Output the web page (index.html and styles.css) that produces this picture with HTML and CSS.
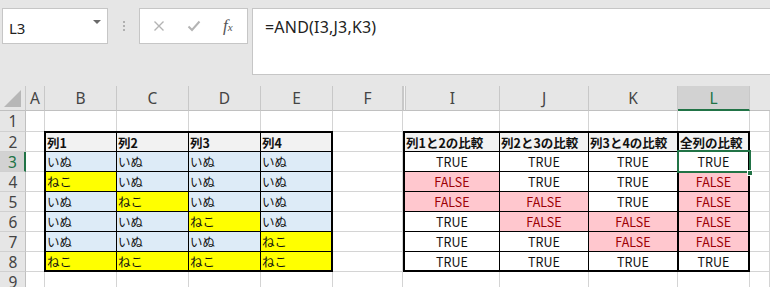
FILE: index.html
```html
<!DOCTYPE html>
<html lang="ja">
<head>
<meta charset="utf-8">
<link rel="stylesheet" href="styles.css">
</head>
<body>
<div class="app">
  <div class="toolbar">
    <div class="namebox"><span class="nb-text">L3</span><span class="nb-arrow"></span></div>
    <div class="grip"><i></i><i></i><i></i></div>
    <div class="fxbox">
      <svg class="ico" width="12" height="12" viewBox="0 0 12 12"><path d="M1.5 1.5 L10.5 10.5 M10.5 1.5 L1.5 10.5" stroke="#b4b4b4" stroke-width="1.4" fill="none"/></svg>
      <svg class="ico" width="14" height="12" viewBox="0 0 14 12"><path d="M1.5 6.5 L5 10 L12.5 1.5" stroke="#b4b4b4" stroke-width="2" fill="none"/></svg>
      <span class="fx">f<sub>x</sub></span>
    </div>
    <div class="formula">=AND(I3,J3,K3)</div>
  </div>

  <div class="sheet">
    <!-- header row -->
    <div class="ch corner"><svg width="25" height="24" viewBox="0 0 25 24"><polygon points="21,4 21,21 4,21" fill="#b7b7b7"/></svg></div>
    <div class="ch">A</div><div class="ch">B</div><div class="ch">C</div><div class="ch">D</div><div class="ch">E</div><div class="ch">F</div><div class="ch hid"></div><div class="ch">I</div><div class="ch">J</div><div class="ch">K</div><div class="ch sel">L</div><div class="ch rest"></div>

    <!-- row 1 -->
    <div class="rh">1</div><div class="c"></div><div class="c"></div><div class="c"></div><div class="c"></div><div class="c"></div><div class="c"></div><div class="c hc"></div><div class="c"></div><div class="c"></div><div class="c"></div><div class="c"></div><div class="c"></div>
    <!-- rows 2-8 (tables placed explicitly) -->
    <div class="rh">2</div><div class="c"></div><div class="c"></div><div class="c"></div>
    <div class="rh rsel">3</div><div class="c"></div><div class="c"></div><div class="c"></div>
    <div class="rh">4</div><div class="c"></div><div class="c"></div><div class="c"></div>
    <div class="rh">5</div><div class="c"></div><div class="c"></div><div class="c"></div>
    <div class="rh">6</div><div class="c"></div><div class="c"></div><div class="c"></div>
    <div class="rh">7</div><div class="c"></div><div class="c"></div><div class="c"></div>
    <div class="rh">8</div><div class="c"></div><div class="c"></div><div class="c"></div>
    <!-- row 9 -->
    <div class="rh">9</div><div class="c"></div><div class="c"></div><div class="c"></div><div class="c"></div><div class="c"></div><div class="c"></div><div class="c hc"></div><div class="c"></div><div class="c"></div><div class="c"></div><div class="c"></div><div class="c"></div>

    <div class="tbl left">
      <div class="th">列1</div><div class="th">列2</div><div class="th">列3</div><div class="th">列4</div>
      <div class="td b">いぬ</div><div class="td b">いぬ</div><div class="td b">いぬ</div><div class="td b">いぬ</div>
      <div class="td y">ねこ</div><div class="td b">いぬ</div><div class="td b">いぬ</div><div class="td b">いぬ</div>
      <div class="td b">いぬ</div><div class="td y">ねこ</div><div class="td b">いぬ</div><div class="td b">いぬ</div>
      <div class="td b">いぬ</div><div class="td b">いぬ</div><div class="td y">ねこ</div><div class="td b">いぬ</div>
      <div class="td b">いぬ</div><div class="td b">いぬ</div><div class="td b">いぬ</div><div class="td y">ねこ</div>
      <div class="td y">ねこ</div><div class="td y">ねこ</div><div class="td y">ねこ</div><div class="td y">ねこ</div>
    </div>

    <div class="tbl right">
      <div class="th">列1と2の比較</div><div class="th">列2と3の比較</div><div class="th">列3と4の比較</div><div class="th lastc">全列の比較</div>
      <div class="tv">TRUE</div><div class="tv">TRUE</div><div class="tv">TRUE</div><div class="tv lastc active">TRUE<span class="selbox"></span><span class="handle"></span></div>
      <div class="tv f">FALSE</div><div class="tv">TRUE</div><div class="tv">TRUE</div><div class="tv f lastc">FALSE</div>
      <div class="tv f">FALSE</div><div class="tv f">FALSE</div><div class="tv">TRUE</div><div class="tv f lastc">FALSE</div>
      <div class="tv">TRUE</div><div class="tv f">FALSE</div><div class="tv f">FALSE</div><div class="tv f lastc">FALSE</div>
      <div class="tv">TRUE</div><div class="tv">TRUE</div><div class="tv f">FALSE</div><div class="tv f lastc">FALSE</div>
      <div class="tv">TRUE</div><div class="tv">TRUE</div><div class="tv">TRUE</div><div class="tv lastc">TRUE</div>
    </div>
  </div>
</div>
</body>
</html>
```

FILE: styles.css
```css
* { box-sizing: border-box; }
html, body { margin: 0; padding: 0; }
body {
  width: 770px;
  height: 287px;
  overflow: hidden;
  background: #e6e6e6;
  font-family: "Liberation Sans", "Noto Sans CJK JP", sans-serif;
}
.app { display: flex; flex-direction: column; }

/* toolbar */
.toolbar {
  height: 86px;
  display: flex;
  align-items: flex-start;
  padding-top: 8px;
  padding-left: 2px;
}
.namebox {
  width: 106px;
  height: 36px;
  background: #fff;
  border: 1px solid #c6c6c6;
  display: flex;
  align-items: center;
  justify-content: space-between;
  padding: 0 6px 0 6px;
}
.nb-text { font-size: 15px; color: #222; font-family: "Noto Sans", sans-serif; margin-top: 4px; }
.nb-arrow {
  width: 0; height: 0;
  border-left: 4px solid transparent;
  border-right: 4px solid transparent;
  border-top: 4px solid #6a6a6a;
  margin-bottom: 8px;
}
.grip {
  width: 31px;
  height: 36px;
  display: flex;
  flex-direction: column;
  align-items: center;
  justify-content: center;
  gap: 2px;
}
.grip i { display: block; width: 2px; height: 2px; background: #b0b0b0; }
.fxbox {
  width: 109px;
  height: 36px;
  background: #fff;
  border: 1px solid #c6c6c6;
  display: flex;
  align-items: center;
  padding-left: 13px;
  gap: 22px;
}
.ico { display: block; }
.fx {
  font-family: "Liberation Serif", serif;
  font-style: italic;
  font-size: 17px;
  color: #555;
  margin-left: 0;
}
.fx sub { font-size: 11px; vertical-align: baseline; }
.formula {
  margin-left: 4px;
  flex: 1;
  height: 67px;
  background: #fff;
  border: 1px solid #c6c6c6;
  border-right: none;
  font-family: "Noto Sans", sans-serif;
  font-size: 16px;
  letter-spacing: 0.2px;
  color: #222;
  padding: 7px 0 0 12px;
}

/* sheet grid */
.sheet {
  display: grid;
  grid-template-columns: 26px 19px 72px 72px 72px 72px 70px 3px 94px 89px 89px 72px 1fr;
  grid-template-rows: 25px 21px repeat(7, 20px) 20px;
  background: #fff;
}
.ch {
  background: #e6e6e6;
  border-right: 1px solid #c8c8c8;
  border-bottom: 1px solid #c0c0c0;
  font-family: "Noto Sans", sans-serif;
  font-size: 15.5px;
  color: #444;
  display: flex;
  align-items: center;
  justify-content: center;
}
.ch.corner { border-right: 1px solid #c8c8c8; }
.ch.hid { background: #f4f4f4; border-left: 1px solid #c8c8c8; }
.ch.rest { border-right: none; }
.ch.sel {
  background: #d2d2d2;
  color: #217346;
  border-bottom: 2px solid #217346;
}
.rh {
  background: #e6e6e6;
  border-right: 1px solid #c0c0c0;
  border-bottom: 1px solid #d0d0d0;
  font-family: "Noto Sans", sans-serif;
  font-size: 15.5px;
  color: #444;
  display: flex;
  align-items: center;
  justify-content: center;
  padding-left: 1px;
}
.rh.rsel {
  background: #d2d2d2;
  color: #217346;
  border-right: 2px solid #217346;
}
.c {
  border-right: 1px solid #d4d4d4;
  border-bottom: 1px solid #d4d4d4;
}
.c.hc { border-right: none; }

/* tables */
.tbl {
  display: grid;
  gap: 1px;
  background: #000;
  border: 2px solid #000;
  margin-top: -1px;
  grid-row: 3 / 10;
  font-family: "Noto Sans CJK JP", sans-serif;
  font-size: 12.5px;
  color: #111;
}
.tbl.left {
  grid-column: 3 / 7;
  margin-left: -1px;
  grid-template-columns: 70px 71px 71px 70px;
  grid-template-rows: 18px repeat(5, 19px) 18px;
}
.tbl.right {
  grid-column: 8 / 13;
  grid-template-columns: 94px 88px 88px 70px;
  grid-template-rows: 18px repeat(5, 19px) 18px;
}
.th {
  background: #f2f2f2;
  font-weight: bold;
  display: flex;
  align-items: center;
  padding-left: 1px;
  white-space: nowrap;
}
.td {
  display: flex;
  align-items: center;
  padding-left: 1px;
}
.td.b { background: #ddebf7; }
.td.y { background: #ffff00; }
.tv {
  background: #fff;
  display: flex;
  align-items: center;
  justify-content: center;
  font-size: 12.5px;
}
.tv.f { background: #ffc7ce; color: #9c0006; }
.lastc { border-left: 1px solid #000; }
.active { position: relative; }
.selbox {
  position: absolute;
  left: -2px; top: -2px; right: -3px; bottom: -2px;
  border: 2px solid #217346;
}
.handle {
  position: absolute;
  width: 6px; height: 6px;
  right: -5px; bottom: -5px;
  background: #217346;
  border: 1px solid #fff;
}
```
